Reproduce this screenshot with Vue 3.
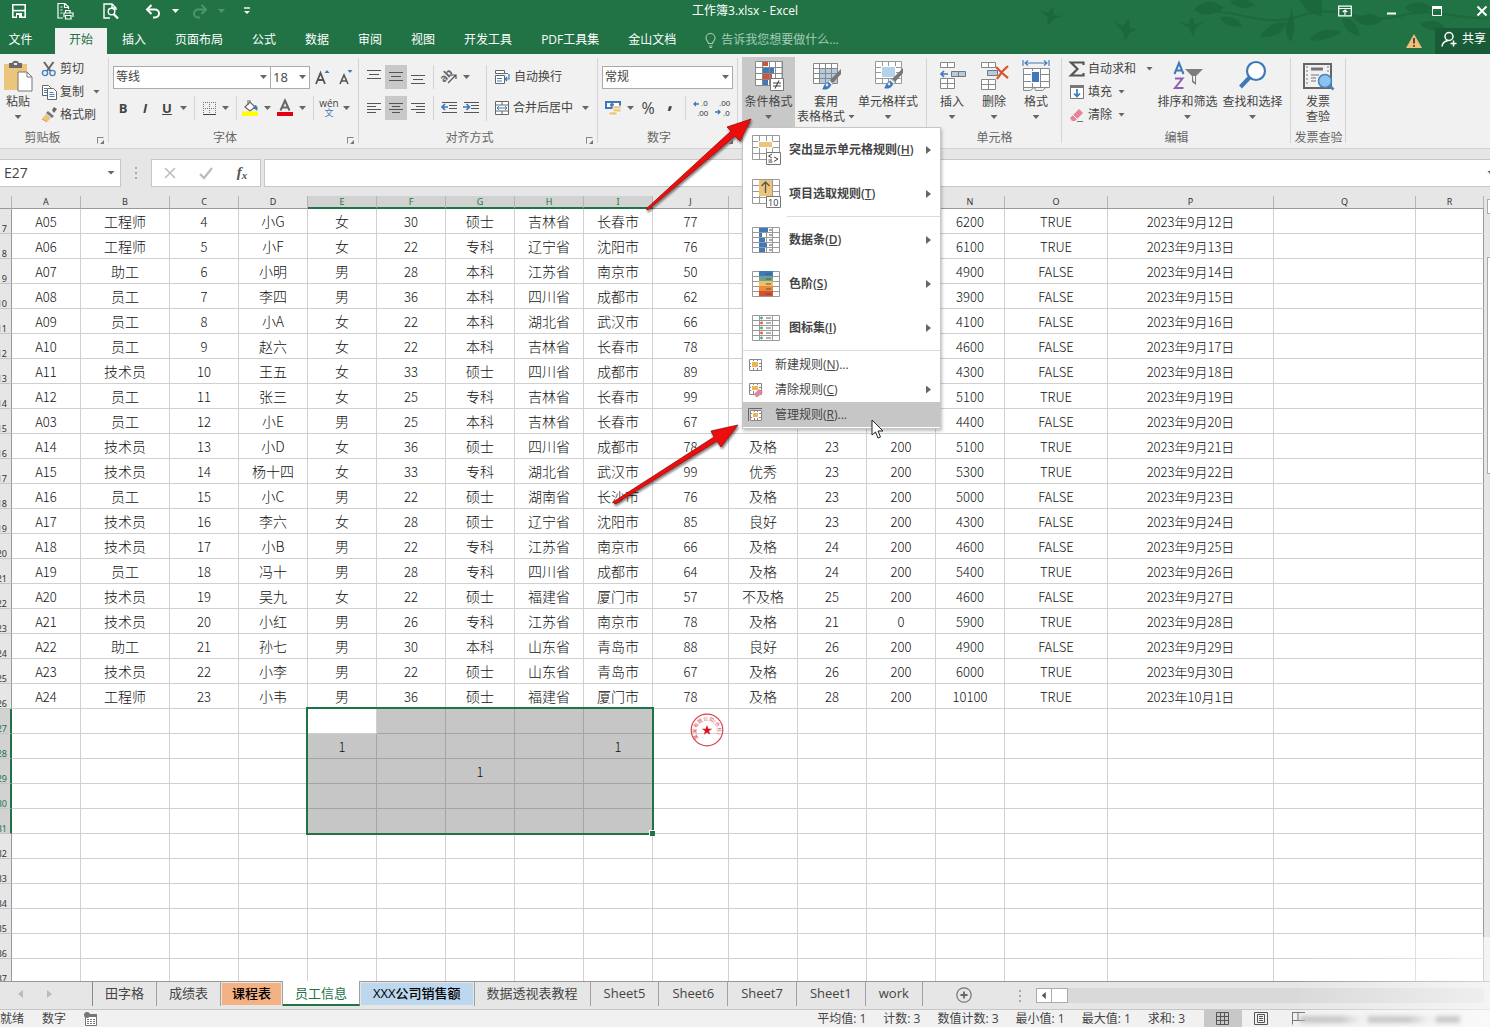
<script setup>
import { h } from 'vue'

const grid = (w, hh, cols, rows, x0 = 0, y0 = 0) => {
  let d = ''
  for (let i = 0; i <= cols; i++) d += `M${x0 + Math.round((w * i) / cols) + 0.5} ${y0 + 0.5}v${hh}`
  for (let j = 0; j <= rows; j++) d += `M${x0 + 0.5} ${y0 + Math.round((hh * j) / rows) + 0.5}h${w}`
  return d
}
const frame = (w, hh, c, r, x = 0, y = 0, s = '#888') => `<path d="${grid(w, hh, c, r, x, y)}" fill="none" stroke="${s}"/>`
const white = (x, y, w, hh) => `<rect x="${x}" y="${y}" width="${w}" height="${hh}" fill="#fff"/>`
const lines = (list) => `<path d="${list.map(([x, y, w]) => `M${x} ${y}.5h${w}`).join('')}" stroke="#555"/>`
const brush = (x, y) =>
  `<g transform="translate(${x} ${y})"><path d="M19 0v5l-8 9-3-3z" fill="#777"/><path d="M7 11l4 4-2 1-3-3z" fill="#fff" stroke="#999" stroke-width=".6"/><path d="M6 13c3 1 4 3 2 5-2 3-6 3-8 2 2-1 1-5 6-7z" fill="#3f79b7"/><circle cx="5" cy="16" r="1.4" fill="#dbe8f5"/></g>`
const tiny = (x, y, t) => `<text x="${x}" y="${y}" font-size="8" font-family="Liberation Sans" fill="#333">${t}</text>`

const icons = {
  save: [16, 16, '<path d="M1.8 1.8h12.4v12.4H1.8z" fill="none" stroke="#fff" stroke-width="1.6"/><path d="M2 7.6h12" stroke="#fff" stroke-width="1.6"/><path d="M5 10h6v5H5z" fill="#fff"/><path d="M6 12h2v3H6z" fill="#217346"/>'],
  print: [18, 18, '<g fill="none" stroke="#fff" stroke-width="1.2"><path d="M7 16H2V1.500h7l3.500 3.500v2M4.500 5h2M4.500 8h2M4.500 11h2M8.500 2v3.500h4"/><path d="M9.500 11V8.500h4.500V11M8 15V11h9v4"/><path d="M9.500 13.500h5.500v3.500h-5.500z"/></g>'],
  preview: [18, 18, '<g fill="none" stroke="#fff" stroke-width="1.4"><path d="M8 16H2V2h8l4 4v2M10 2v4h4"/><circle cx="9.500" cy="9.500" r="3.300"/></g><path d="M11.500 12l4.500 4.500" stroke="#fff" stroke-width="2.400"/>'],
  undo: [16, 14, '<path d="M2 5.500h8a4 4 0 010 8H8" fill="none" stroke="#fff" stroke-width="2"/><path d="M6.500 1L2 5.500 6.500 10" fill="none" stroke="#fff" stroke-width="2"/>'],
  redo: [16, 14, '<path d="M14 5.500H6a4 4 0 000 8h2M9.500 1L14 5.500 9.500 10" fill="none" stroke="#4f9470" stroke-width="2"/>'],
  custom: [10, 8, '<path d="M2 1h6" stroke="#fff" stroke-width="1.400"/><path d="M2 4h6L5 7z" fill="#fff"/>'],
  ribbonOpt: [14, 12, '<path d="M.7 1.200h12.600v9.600H.7zM1 3.500h12M7 10V5M4.800 7L7 5l2.200 2" fill="none" stroke="#fff" stroke-width="1.200"/>'],
  min: [10, 12, '<path d="M1 8.500h9" stroke="#fff" stroke-width="2"/>'],
  max: [12, 12, '<path d="M1.500 1.500h9v9h-9z" fill="none" stroke="#fff"/><path d="M1 2.500h10" stroke="#fff" stroke-width="3"/>'],
  close: [12, 12, '<path d="M1.500 1.500l9 9M10.500 1.500l-9 9" stroke="#fff" stroke-width="2"/>'],
  bulb: [11, 15, '<path d="M3.500 10.500C3.500 8.500 1 8 1 5a4.500 4.500 0 019 0c0 3-2.500 3.500-2.500 5.500zM4 13h3.500M4.500 14.500H7" fill="none" stroke="#a6cbb6" stroke-width="1.100"/>'],
  warn: [16, 14, '<path d="M8 0l8 14H0z" fill="#eec07c"/><path d="M8 4v5.500M8 11v1.800" stroke="#433" stroke-width="1.700"/>'],
  share: [16, 16, '<g fill="none" stroke="#fff" stroke-width="1.500"><circle cx="8" cy="5.500" r="4"/><path d="M1 15.500c.5-4 3-5.500 6-6M12.500 9.500v6M9.500 12.500h6"/></g>'],
  paste: [30, 32, '<path d="M1 4h23v26H1z" fill="#ecc57d"/><path d="M6 3h3c1-3 6-3 7 0h3v5H6z" fill="#6b6b6b"/><rect x="11" y="3" width="3" height="2" fill="#f1f1f1"/><path d="M15 12h9l5 5v14H15z" fill="#fff" stroke="#777"/><path d="M24 12v5h5" fill="none" stroke="#777"/>'],
  cut: [16, 16, '<path d="M3 1l6.500 9M12.500 1L6 10" stroke="#666" stroke-width="2"/><circle cx="4" cy="12" r="2.600" fill="none" stroke="#4a82bd" stroke-width="1.400"/><circle cx="11.500" cy="12" r="2.600" fill="none" stroke="#4a82bd" stroke-width="1.400"/>'],
  copy: [16, 16, '<g fill="#fff" stroke="#666"><path d="M1.500 1.500h6l2 2v8h-8z"/><path d="M6.500 4.500h6l3 3v8h-9z"/></g><path d="M3 4.500h3M3 6.500h3M3 8.500h3M8.500 8.500h4M8.500 10.500h5M8.500 12.500h5" stroke="#4a82bd"/>'],
  painter: [16, 16, '<path d="M11 3l2-3 3 2-3 4z" fill="#666"/><path d="M7 4l6 5-2 2-6-5z" fill="#777"/><path d="M5 7l5 4-4 4-5-3z" fill="#ecc57d"/><path d="M1 12l5 3" stroke="#cf9c4a"/>'],
  growA: [15, 16, '<path d="M1 15L5.500 4 10 15M2.800 11h5.500" fill="none" stroke="#555" stroke-width="1.800"/><path d="M9.500 4h5L12 1z" fill="#3f79b7"/>'],
  shrinkA: [15, 16, '<path d="M2 15L6 6l4 9M3.500 12h5" fill="none" stroke="#555" stroke-width="1.600"/><path d="M9.500 1h5L12 4z" fill="#3f79b7"/>'],
  border: [15, 15, '<path d="M1.500 1v12M7.500 1v12M13.500 1v12M1 1.500h13M1 7.500h13" stroke="#777" stroke-dasharray="1 1"/><path d="M1 13.500h13" stroke="#444"/>'],
  fill: [18, 16, '<path d="M3 7l5-5 5 5-5 4z" fill="#fff" stroke="#666" stroke-width="1.200"/><path d="M6 5V0M8 2V0" stroke="#666"/><path d="M13 5c3 1 3 4 2 6-1-2-3-2-4-2z" fill="#3f79b7"/><path d="M0 11.500h16V16H0z" fill="#ff0"/>'],
  fontColor: [16, 16, '<path d="M3.500 10.500L8 0.500l4.500 10M5 7.500h6" fill="none" stroke="#666" stroke-width="2"/><path d="M0 12h16v4H0z" fill="#e2000f"/>'],
  top: [16, 18, lines([[1, 2, 14], [3, 6, 10], [1, 10, 14]])],
  middle: [16, 18, lines([[1, 4, 14], [3, 8, 10], [1, 12, 14]])],
  bottom: [16, 18, lines([[1, 7, 14], [3, 11, 10], [1, 15, 14]])],
  left: [16, 16, lines([[1, 3, 14], [1, 6, 9], [1, 9, 14], [1, 12, 9]])],
  center: [16, 16, lines([[1, 3, 14], [4, 6, 8], [1, 9, 14], [4, 12, 8]])],
  right: [16, 16, lines([[1, 3, 14], [6, 6, 9], [1, 9, 14], [6, 12, 9]])],
  orient: [18, 18, '<text x="1" y="12" font-size="11" font-weight="bold" font-family="Open Sans" fill="#666" transform="rotate(-45 6 10)">ab</text><path d="M8 15l8-8M12 7h4v4" fill="none" stroke="#555" stroke-width="1.200"/>'],
  outdent: [16, 16, lines([[1, 2, 15], [8, 5, 8], [8, 8, 8], [1, 12, 15]]) + '<path d="M7 7H1M4 4L1 7l3 3" fill="none" stroke="#3f79b7" stroke-width="1.700"/>'],
  indent: [16, 16, lines([[1, 2, 15], [8, 5, 8], [8, 8, 8], [1, 12, 15]]) + '<path d="M0 7h6M3.500 4l3 3-3 3" fill="none" stroke="#3f79b7" stroke-width="1.700"/>'],
  wrap: [17, 16, '<path d="M1.500 1.500h9v3h-9zM1.500 6.500h9v8h-9z" fill="#fff" stroke="#666"/><path d="M3 9.500h5M3 12h5" stroke="#3f79b7"/><path d="M10 4.500h4M15 5v5h-4M13 8l-2 2 2 2" fill="none" stroke="#3f79b7" stroke-width="1.200"/>'],
  merge: [16, 16, '<path d="M1.500 1.500h13v13h-13zM1.500 5h13M1.500 11h13M8 1.500V5M8 11v3.500" fill="#fff" stroke="#666"/><path d="M3 8h10M5 6.200L3 8l2 1.800M11 6.200L13 8l-2 1.800" fill="none" stroke="#3f79b7"/>'],
  money: [18, 18, '<path d="M1 2h16v8H1z" fill="#3f79b7"/><path d="M3 4h12v4H3z" fill="#fff"/><circle cx="8" cy="6" r="2" fill="#3f79b7"/><g fill="#ecc57d" stroke="#fff" stroke-width=".6"><rect x="9" y="7" width="8" height="3"/><rect x="9" y="10" width="8" height="3"/><rect x="5" y="13" width="8" height="3"/></g>'],
  decInc: [18, 18, tiny(9, 7, '.0') + tiny(5, 17, '.00') + '<path d="M7 5H2M4 3L2 5l2 2" fill="none" stroke="#3f79b7" stroke-width="1.300"/>'],
  decDec: [18, 18, tiny(5, 7, '.00') + tiny(9, 17, '.0') + '<path d="M1 13h5M4 11l2 2-2 2" fill="none" stroke="#3f79b7" stroke-width="1.300"/>'],
  cond: [32, 32, white(2, 1, 26, 24) + '<path d="M10 1h5v5h-5zM10 14h9v5h-9z" fill="#d1533a"/><path d="M10 7h11v6H10zM10 20h5v5h-5z" fill="#3f79b7"/>' + frame(27, 24, 4, 4, 2, 1) + '<path d="M17.500 18.500h13v12h-13z" fill="#fff" stroke="#777"/><path d="M20 23h8M20 26h8M26 20.500l-4 8" stroke="#444" stroke-width="1.100"/>'],
  tableFmt: [32, 32, white(3, 3, 25, 21) + '<path d="M9 9h18v15H9z" fill="#b4cbe2"/>' + frame(24, 20, 4, 4, 3, 3) + brush(12, 9)],
  cellStyle: [32, 32, white(3, 1, 26, 22) + frame(26, 22, 4, 4, 3, 1, '#999') + '<path d="M9.500 6.500h14v11h-14z" fill="#b4d2ec" stroke="#fff"/>' + brush(12, 8)],
  insert: [30, 32, white(3, 2, 15, 5) + frame(14, 5, 2, 1, 3, 2) + '<path d="M14.500 11.500h14v5h-14zM21.500 11.500v5" fill="#b4cbe2" stroke="#777"/><path d="M11 14H4M7 11l-3 3 3 3" fill="none" stroke="#3f79b7" stroke-width="1.700"/>' + white(3, 19, 15, 10) + frame(14, 10, 2, 2, 3, 18)],
  remove: [30, 32, white(2, 2, 15, 5) + frame(14, 5, 2, 1, 2, 2) + '<path d="M8.500 10.500h10v5h-10z" fill="#b4cbe2" stroke="#777"/>' + white(2, 19, 15, 10) + frame(14, 10, 2, 2, 2, 19) + '<path d="M17 7c4 4 8 8 12 11M29 6c-5 4-8 8-11 13" fill="none" stroke="#d9532f" stroke-width="2.200"/>'],
  format: [30, 32, '<path d="M2 0v6M28 0v6M4 3h22M7 .5L4 3l3 2.500M23 .5L26 3l-3 2.500" fill="none" stroke="#3f79b7" stroke-width="1.100"/>' + white(2, 8, 27, 19) + frame(26, 19, 3, 3, 2, 8) + '<path d="M10.500 11.500h8v11h-8z" fill="#3f79b7" stroke="#fff"/><path d="M2.500 27v3.500h7l4-3.500 1 3.500h7l4-3.500" fill="none" stroke="#888"/>'],
  sum: [16, 16, '<path d="M14.500 4V1.500H2L8.500 8 2 14.500h12.500V12" fill="none" stroke="#555" stroke-width="2.200"/>'],
  down: [16, 16, '<path d="M1.500 1.500h13v13h-13z" fill="#fff" stroke="#777"/><path d="M1 1h14v3H1z" fill="#777"/><path d="M8 5v7M5 9.500L8 12.500l3-3" fill="none" stroke="#3f79b7" stroke-width="1.700"/>'],
  eraser: [16, 16, '<path d="M1 11l9-9 4 4-8 8H3z" fill="#e8849a"/><path d="M4 8l4 4" stroke="#fff"/><path d="M8 14.500h6" stroke="#777"/>'],
  sort: [30, 32, '<path d="M1.500 14L6 3l4.500 11M3.500 10.500h5" fill="none" stroke="#3f79b7" stroke-width="2"/><path d="M2 18.500h7.500L2 28h8.500" fill="none" stroke="#8d5fb5" stroke-width="2"/><path d="M12 9h18l-7 7v9l-4-3v-6z" fill="#7d7d7d"/><path d="M20 16h2v6l-1.500-1z" fill="#fff"/>'],
  find: [30, 32, '<circle cx="18" cy="11" r="9" fill="#fff" stroke="#3f79b7" stroke-width="2.200"/><path d="M11.500 17.500L2.500 27" stroke="#3f79b7" stroke-width="4"/>'],
  invoice: [32, 30, '<path d="M2 3h27v24H2z" fill="#f1f1f1" stroke="#666" stroke-width="2"/><path d="M5 5v20M26 5v8" stroke="#777" stroke-dasharray="2 2"/><path d="M9 8h12" stroke="#777" stroke-width="3"/><path d="M9 14h8M9 17h5M9 20h5" stroke="#777" stroke-width="1.200"/><circle cx="23" cy="20" r="6.500" fill="#8cc3f2" stroke="#4a82bd" stroke-width="1.500"/><path d="M27.500 24.500l4 4" stroke="#4a82bd" stroke-width="2.500"/>'],
  mHigh: [30, 32, white(1, 1, 27, 24) + frame(27, 24, 4, 4, 1, 1, '#999') + '<path d="M7.500 7.500h14v6h-14z" fill="#ecc57d" stroke="#fff"/><path d="M15.500 18.500h14v12h-14z" fill="#fff" stroke="#777"/><path d="M21 20l-3.500 2 3.500 2M17.500 26H21M17.500 28h4M23 23l4 2-4 2.500" fill="none" stroke="#444"/>'],
  mTop: [30, 32, white(1, 1, 27, 24) + frame(27, 24, 4, 4, 1, 1, '#999') + '<path d="M8 2h13v16H8z" fill="#ecc57d"/><path d="M14.500 15V4M10.500 8l4-4 4 4" fill="none" stroke="#555" stroke-width="1.300"/><path d="M15.500 18.500h14v11h-14z" fill="#fff" stroke="#777"/><text x="17" y="28" font-size="9" font-weight="400" font-family="Open Sans" fill="#333">10</text>'],
  mBars: [30, 32, white(1, 3, 27, 25) + frame(27, 25, 4, 5, 1, 3, '#999') + '<path d="M8 4h9v4H8zM8 9h3v4H8zM8 14h6v4H8zM8 19h8v4H8zM8 24h6v4H8z" fill="#3f79b7"/><path d="M18 6h3M18 11h3M18 16h3M18 21h3M18 26h3" stroke="#555"/>'],
  mScale: [30, 32, white(1, 3, 27, 25) + frame(27, 25, 4, 5, 1, 3, '#999') + '<path d="M8 3h14v5H8z" fill="#3f79b7"/><path d="M8 8h14v5H8z" fill="#6ba393"/><path d="M8 13h14v5H8z" fill="#eec169"/><path d="M8 18h14v5H8z" fill="#ea8b3e"/><path d="M8 23h14v5H8z" fill="#d8502f"/><path d="M15 6h5M15 11h5M15 16h5M15 21h5M15 26h5" stroke="#555"/>'],
  mIcons: [30, 32, white(1, 3, 27, 25) + frame(27, 25, 4, 5, 1, 3, '#999') + '<path d="M9 4h11v4H9zM9 9h11v4H9zM9 14h11v4H9zM9 19h11v4H9zM9 24h11v4H9z" fill="#fff"/><g fill="#4eae6c"><circle cx="10.500" cy="16" r="1.400"/><circle cx="10.500" cy="26" r="1.400"/><circle cx="10.500" cy="6" r="1.400"/></g><g fill="#e2574a"><circle cx="10.500" cy="11" r="1.400"/><circle cx="10.500" cy="21" r="1.400"/></g><path d="M15 6h5M15 11h5M15 16h5M15 21h5M15 26h5" stroke="#666"/>'],
  sNew: [16, 16, white(1, 2, 12, 11) + frame(12, 11, 3, 3, 1, 2) + '<path d="M3.500 4.500h7v6h-7z" fill="#ecb45c" stroke="#fff"/>'],
  sClear: [16, 16, white(1, 2, 12, 11) + frame(12, 11, 3, 3, 1, 1) + '<path d="M3.500 3.500h7v5h-7z" fill="#ecb45c" stroke="#fff"/><path d="M6 12l5-5 4 3-5 5H8z" fill="#e8849a"/>'],
  sManage: [16, 16, '<path d="M.5 14V1.500H14" fill="none" stroke="#666"/>' + white(2, 3, 12, 11) + frame(11, 10, 3, 3, 2, 3) + '<path d="M4.500 5.500h6v5h-6z" fill="#ecb45c" stroke="#fff"/>'],
  macro: [14, 14, '<path d="M1.500 4.500h11v9h-11z" fill="#fff" stroke="#777"/><path d="M5 2h8v3H5z" fill="#777"/><circle cx="3" cy="3" r="3" fill="#777"/><path d="M3 7.500h8M3 9.500h8M3 11.500h8" stroke="#777" stroke-dasharray="2 1"/>'],
  plus: [16, 16, '<circle cx="8" cy="8" r="7.200" fill="none" stroke="#777" stroke-width="1.200"/><path d="M8 4.500v7M4.500 8h7" stroke="#666" stroke-width="1.800"/>'],
  vNormal: [14, 14, frame(12, 12, 3, 3, 0, 0, '#555')],
  vPage: [14, 14, '<path d="M.5.5h13v12H.5zM3.500 2.500h7v8h-7zM5 4.500h4M5 6.500h4M5 8.500h4" fill="none" stroke="#555"/>'],
  vBreak: [14, 14, '<path d="M.5.5v12M0 .5h13M6 0v8M.5 8.500H13" fill="none" stroke="#777"/>'],
}
const Icon = ({ name }) => {
  const [w, hh, html] = icons[name]
  return h('svg', { width: w, height: hh, viewBox: `0 0 ${w} ${hh}`, innerHTML: html, 'aria-hidden': 'true' })
}
Icon.props = ['name']

const tabs = ['插入', '页面布局', '公式', '数据', '审阅', '视图', '开发工具', 'PDF工具集', '金山文档']
const bigMenu = [
  ['mHigh', '突出显示单元格规则', 'H'],
  ['mTop', '项目选取规则', 'T'],
  ['mBars', '数据条', 'D'],
  ['mScale', '色阶', 'S'],
  ['mIcons', '图标集', 'I'],
]
const smallMenu = [
  ['sNew', '新建规则', 'N', '...', false],
  ['sClear', '清除规则', 'C', '', true],
  ['sManage', '管理规则', 'R', '...', false],
]

const headW = 12
const rowH = 25
const colHeadH = 13
const widths = [69, 89, 69, 69, 69, 69, 69, 69, 69, 76, 69, 69, 69, 69, 103, 166, 142]
const letters = 'ABCDEFGHIJKLMNOPQR'.split('')
const raw = `A05 工程师 4 小G 女 30 硕士 吉林省 长春市 77 - - - 6200 TRUE 2023年9月12日
A06 工程师 5 小F 女 22 专科 辽宁省 沈阳市 76 - - - 6100 TRUE 2023年9月13日
A07 助工 6 小明 男 28 本科 江苏省 南京市 50 - - - 4900 FALSE 2023年9月14日
A08 员工 7 李四 男 36 本科 四川省 成都市 62 - - - 3900 FALSE 2023年9月15日
A09 员工 8 小A 女 22 本科 湖北省 武汉市 66 - - - 4100 FALSE 2023年9月16日
A10 员工 9 赵六 女 22 本科 吉林省 长春市 78 - - - 4600 FALSE 2023年9月17日
A11 技术员 10 王五 女 33 硕士 四川省 成都市 89 - - - 4300 FALSE 2023年9月18日
A12 员工 11 张三 女 25 专科 吉林省 长春市 99 - - - 5100 TRUE 2023年9月19日
A03 员工 12 小E 男 25 本科 吉林省 长春市 67 - - - 4400 FALSE 2023年9月20日
A14 技术员 13 小D 女 36 硕士 四川省 成都市 78 及格 23 200 5100 TRUE 2023年9月21日
A15 技术员 14 杨十四 女 33 专科 湖北省 武汉市 99 优秀 23 200 5300 TRUE 2023年9月22日
A16 员工 15 小C 男 22 硕士 湖南省 长沙市 76 及格 23 200 5000 FALSE 2023年9月23日
A17 技术员 16 李六 女 28 硕士 辽宁省 沈阳市 85 良好 23 200 4300 FALSE 2023年9月24日
A18 技术员 17 小B 男 22 专科 江苏省 南京市 66 及格 24 200 4600 FALSE 2023年9月25日
A19 员工 18 冯十 男 28 专科 四川省 成都市 64 及格 24 200 5400 TRUE 2023年9月26日
A20 技术员 19 吴九 女 22 硕士 福建省 厦门市 57 不及格 25 200 4600 FALSE 2023年9月27日
A21 技术员 20 小红 男 26 专科 江苏省 南京市 78 及格 21 0 5900 TRUE 2023年9月28日
A22 助工 21 孙七 男 30 本科 山东省 青岛市 88 良好 26 200 4900 FALSE 2023年9月29日
A23 技术员 22 小李 男 22 硕士 山东省 青岛市 67 及格 26 200 6000 TRUE 2023年9月30日
A24 工程师 23 小韦 男 36 硕士 福建省 厦门市 78 及格 28 200 10100 TRUE 2023年10月1日`
const data = raw.split('\n').map((l) => l.split(' ').map((c) => (c === '-' ? '' : c)))
const loose = { 28: { 4: '1', 8: '1' }, 29: { 6: '1' } }
const rows = Array.from({ length: 31 }, (_, i) => {
  const n = i + 7
  return { n, cells: letters.map((_, c) => data[i]?.[c] ?? loose[n]?.[c] ?? '') }
})
const sel = { c0: 4, c1: 8, r0: 27, r1: 31 }
const inCols = (c) => c >= sel.c0 && c <= sel.c1
const inRows = (n) => n >= sel.r0 && n <= sel.r1
const cellClass = (n, c, t) => ({
  latin: /^[\x00-\x7f]|^2023/.test(t),
  picked: inCols(c) && inRows(n) && !(c === sel.c0 && n === sel.r0),
})
const span = (a, b) => widths.slice(a, b).reduce((s, w) => s + w, 0)
const selStyle = {
  left: `${headW + span(0, sel.c0) - 2}px`,
  top: `${colHeadH + (sel.r0 - 7) * rowH - 2}px`,
  width: `${span(sel.c0, sel.c1 + 1) + 3}px`,
  height: `${(sel.r1 - sel.r0 + 1) * rowH + 3}px`,
}
const sheets = [
  ['田字格'], ['成绩表'], ['课程表', 'orange'], ['员工信息', 'active'], ['XXX公司销售额', 'blue'],
  ['数据透视表教程'], ['Sheet5', 'en'], ['Sheet6', 'en'], ['Sheet7', 'en'], ['Sheet1', 'en'], ['work', 'en'],
]
const stats = ['平均值: 1', '计数: 3', '数值计数: 3', '最小值: 1', '最大值: 1', '求和: 3']
</script>

<template>
  <div class="app">
    <header class="top">
      <svg class="deco" width="480" height="54" viewBox="0 0 480 54" aria-hidden="true">
        <g fill="#1b653b" opacity=".75">
          <path d="M30 10l8 3 5-6 1 8 8 1-9 4-6 6 1-8z" /><path d="M104 22l9 4 6-8 1 10 8 1-8 4-5 8-2-9z" />
          <path d="M168 22l10 2 4-8 3 8 9-2-8 6-3 9-4-9z" />
          <path d="M184 10c10-12 22-9 30-2-10 8-20 8-30 2zM210 18c10-4 18 0 22 8-10 2-18-1-22-8zM220 2c8-5 18-3 25 3-10 5-18 4-25-3z" />
          <path d="M250 37c6-10 14-16 26-14-2 10-12 15-26 14zM282 14c4 10 3 18-1 28-7-8-8-18 1-28zM300 40c8-12 20-12 32-8-10 6-20 10-32 8zM332 18c9-1 16 6 18 18-10-1-17-8-18-18z" />
          <path d="M290 0h22v16c-10-1-18-6-22-16zM345 20c8-8 20-8 28 0-8 7-20 7-28 0zM395 8c8-8 20-7 28 0-8 8-20 7-28 0zM410 24c10-6 20-3 26 4-9 5-19 3-26-4z" />
        </g>
        <path d="M190 14c30-10 60 16 100 2s60 10 100 0 50 4 90 2M282 10l-4 24M335 14l20 8" fill="none" stroke="#1b653b" stroke-width="2" opacity=".75" />
      </svg>
      <div class="title">
        <div class="quick">
          <button aria-label="保存" class="w38"><Icon name="save" /></button>
          <button aria-label="快速打印" class="w54"><Icon name="print" /></button>
          <button aria-label="打印预览" class="w38"><Icon name="preview" /></button>
          <button aria-label="撤消" class="w46"><Icon name="undo" /></button>
          <i class="caret lit"></i>
          <button aria-label="恢复" class="w38"><Icon name="redo" /></button>
          <i class="caret dim"></i>
          <button aria-label="自定义" class="w38"><Icon name="custom" /></button>
        </div>
        <h1>工作簿3.xlsx - Excel</h1>
        <div class="win">
          <button aria-label="功能区选项"><Icon name="ribbonOpt" /></button>
          <button aria-label="最小化"><Icon name="min" /></button>
          <button aria-label="最大化"><Icon name="max" /></button>
          <button aria-label="关闭"><Icon name="close" /></button>
        </div>
      </div>
      <nav class="tabs">
        <button class="file">文件</button>
        <button class="on">开始</button>
        <button v-for="t in tabs" :key="t">{{ t }}</button>
        <button class="tell"><Icon name="bulb" />告诉我您想要做什么...</button>
        <span class="grow"></span>
        <Icon name="warn" class="warn" />
        <button class="share"><Icon name="share" />共享</button>
      </nav>
    </header>

    <section class="ribbon">
      <div class="group clip">
        <div class="body">
          <button class="big paste"><Icon name="paste" /><span>粘贴</span><i class="caret"></i></button>
          <div class="stack">
            <button><Icon name="cut" />剪切</button>
            <button class="copy"><Icon name="copy" />复制<i class="caret"></i></button>
            <button><Icon name="painter" />格式刷</button>
          </div>
        </div>
        <footer>剪贴板<i class="launch"></i></footer>
      </div>

      <div class="group font">
        <div class="body two">
          <div class="line">
            <label class="combo fname"><select aria-label="字体"><option>等线</option></select><i class="caret"></i></label>
            <label class="combo fsize"><select aria-label="字号"><option>18</option></select><i class="caret"></i></label>
            <button class="w24" aria-label="增大字号"><Icon name="growA" /></button>
            <button class="w22" aria-label="减小字号"><Icon name="shrinkA" /></button>
          </div>
          <div class="line">
            <button class="w20"><b>B</b></button><button class="w24"><b><em>I</em></b></button><button class="w20"><b><u>U</u></b></button>
            <i class="caret"></i><i class="sep"></i>
            <button class="w20" aria-label="边框"><Icon name="border" /></button><i class="caret"></i><i class="sep"></i>
            <button class="w20" aria-label="填充颜色"><Icon name="fill" /></button><i class="caret"></i>
            <button class="w22" aria-label="字体颜色"><Icon name="fontColor" /></button><i class="caret"></i><i class="sep"></i>
            <button class="w22 wen"><span>wén</span><span class="han">文</span></button><i class="caret"></i>
          </div>
        </div>
        <footer>字体<i class="launch"></i></footer>
      </div>

      <div class="group align">
        <div class="body">
          <div class="two">
            <div class="line">
              <button class="w22" aria-label="顶端对齐"><Icon name="top" /></button><button class="w22 sel" aria-label="垂直居中"><Icon name="middle" /></button><button class="w22" aria-label="底端对齐"><Icon name="bottom" /></button>
              <i class="sep"></i><button class="w22" aria-label="方向"><Icon name="orient" /></button><i class="caret"></i>
            </div>
            <div class="line">
              <button class="w22" aria-label="左对齐"><Icon name="left" /></button><button class="w22 sel" aria-label="居中"><Icon name="center" /></button><button class="w22" aria-label="右对齐"><Icon name="right" /></button>
              <i class="sep"></i><button class="w22" aria-label="减少缩进"><Icon name="outdent" /></button><button class="w22" aria-label="增加缩进"><Icon name="indent" /></button>
            </div>
          </div>
          <i class="sep tall"></i>
          <div class="two">
            <div class="line"><button class="txt"><Icon name="wrap" />自动换行</button></div>
            <div class="line"><button class="txt"><Icon name="merge" />合并后居中</button><i class="caret wide"></i></div>
          </div>
        </div>
        <footer>对齐方式<i class="launch"></i></footer>
      </div>

      <div class="group num">
        <div class="body two">
          <div class="line"><label class="combo nfmt"><select aria-label="数字格式"><option>常规</option></select><i class="caret"></i></label></div>
          <div class="line">
            <button class="w22" aria-label="会计数字格式"><Icon name="money" /></button><i class="caret"></i>
            <button class="w22 pct">%</button><button class="w22 comma">,</button><i class="sep"></i>
            <button class="w22" aria-label="增加小数位数"><Icon name="decInc" /></button><button class="w22" aria-label="减少小数位数"><Icon name="decDec" /></button>
          </div>
        </div>
        <footer>数字<i class="launch"></i></footer>
      </div>

      <div class="group styles">
        <div class="body">
          <div class="anchor">
            <button class="big open"><Icon name="cond" /><span>条件格式</span><i class="caret"></i></button>
            <div class="menu" role="menu">
              <template v-for="(m, i) in bigMenu" :key="m[0]">
                <button class="mi" role="menuitem"><Icon :name="m[0]" /><span>{{ m[1] }}(<u>{{ m[2] }}</u>)</span><i class="sub"></i></button>
                <hr v-if="i === 1" class="inset" />
              </template>
              <hr />
              <button v-for="m in smallMenu" :key="m[0]" class="mi small" :class="{ hot: m[0] === 'sManage' }" role="menuitem"><Icon :name="m[0]" /><span>{{ m[1] }}(<u>{{ m[2] }}</u>){{ m[3] }}</span><i v-if="m[4]" class="sub"></i></button>
            </div>
          </div>
          <button class="big"><Icon name="tableFmt" /><span>套用</span><span class="row">表格格式<i class="caret"></i></span></button>
          <button class="big"><Icon name="cellStyle" /><span>单元格样式</span><i class="caret"></i></button>
        </div>
      </div>

      <div class="group cells">
        <div class="body">
          <button class="big"><Icon name="insert" /><span>插入</span><i class="caret"></i></button>
          <button class="big"><Icon name="remove" /><span>删除</span><i class="caret"></i></button>
          <button class="big"><Icon name="format" /><span>格式</span><i class="caret"></i></button>
        </div>
        <footer>单元格</footer>
      </div>

      <div class="group edit">
        <div class="body">
          <div class="stack">
            <button class="total"><Icon name="sum" />自动求和<i class="caret"></i></button>
            <button><Icon name="down" />填充<i class="caret"></i></button>
            <button><Icon name="eraser" />清除<i class="caret"></i></button>
          </div>
          <button class="big"><Icon name="sort" /><span>排序和筛选</span><i class="caret"></i></button>
          <button class="big"><Icon name="find" /><span>查找和选择</span><i class="caret"></i></button>
        </div>
        <footer>编辑</footer>
      </div>

      <div class="group inv">
        <div class="body"><button class="big"><Icon name="invoice" /><span>发票</span><span>查验</span></button></div>
        <footer>发票查验</footer>
      </div>
    </section>

    <section class="fbar">
      <label class="namebox"><input value="E27" aria-label="名称框" /><i class="caret"></i></label>
      <i class="dots"></i>
      <div class="fx">
        <button aria-label="取消"><svg width="14" height="14" viewBox="0 0 14 14"><path d="M2 2l10 10M12 2L2 12" stroke="#bbb" stroke-width="1.500" /></svg></button>
        <button aria-label="输入"><svg width="14" height="14" viewBox="0 0 14 14"><path d="M1 8l4 4 8-10" fill="none" stroke="#bbb" stroke-width="2.200" /></svg></button>
        <button class="fn"><em>f</em><small><em>x</em></small></button>
      </div>
      <label class="formula"><input value="" aria-label="编辑栏" /><i class="caret"></i></label>
    </section>

    <main class="work">
      <div class="sheet">
        <table>
          <colgroup><col :style="{ width: headW + 'px' }" /><col v-for="(w, i) in widths" :key="i" :style="{ width: w + 'px' }" /><col /></colgroup>
          <thead>
            <tr><th class="corner"></th><th v-for="(l, c) in letters" :key="l" scope="col" :class="{ on: inCols(c) }">{{ l }}</th></tr>
          </thead>
          <tbody>
            <tr v-for="r in rows" :key="r.n">
              <th scope="row" :class="{ on: inRows(r.n) }"><div>{{ r.n }}</div></th>
              <td v-for="(t, c) in r.cells" :key="c" :class="cellClass(r.n, c, t)">{{ t }}</td>
            </tr>
          </tbody>
        </table>
        <div class="selection" :style="selStyle"><i></i></div>
        <svg class="stamp" width="34" height="34" viewBox="0 0 34 34">
          <circle cx="17" cy="17" r="15.800" fill="none" stroke="#d8404c" stroke-width="1.200" />
          <path id="arc" d="M9 25a10.500 10.500 0 1116 0" fill="none" />
          <text font-size="5" fill="#d8404c"><textPath href="#arc">某某有限公司(合伙)</textPath></text>
          <path d="M17 12l1.300 3.700h3.900L19 18l1.200 3.700-3.200-2.200-3.200 2.200L15 18l-3.200-2.300h3.900z" fill="#e01020" />
        </svg>
      </div>
      <div class="vscroll"><i class="up"></i><i class="thumb"></i></div>
    </main>

    <div class="sheetbar">
      <div class="nav"><i class="pl"></i><i class="pr"></i></div>
      <button v-for="s in sheets" :key="s[0]" :class="s[1]"><span>{{ s[0] }}</span></button>
      <button class="add" aria-label="新工作表"><Icon name="plus" /></button>
      <i class="dots"></i>
      <div class="hscroll"><i class="lbtn"></i><i class="hthumb"></i></div>
    </div>

    <footer class="status">
      <span class="ready">就绪</span><span>数字</span><Icon name="macro" />
      <span class="grow"></span>
      <span v-for="s in stats" :key="s" class="stat">{{ s }}</span>
      <div class="views">
        <button class="sel" aria-label="普通"><Icon name="vNormal" /></button>
        <button aria-label="页面布局视图"><Icon name="vPage" /></button>
        <button aria-label="分页预览"><Icon name="vBreak" /></button>
      </div>
    </footer>
    <div class="haze"><i></i></div>

    <svg class="arrows" width="160" height="400" viewBox="600 110 160 400" aria-hidden="true">
      <defs><filter id="sh" x="-20%" y="-20%" width="140%" height="140%"><feDropShadow dx="1" dy="2" stdDeviation="1" flood-opacity=".5" /></filter></defs>
      <g fill="#ee1010" stroke="#8f1010" stroke-width=".8" filter="url(#sh)">
        <path d="M646 209L731 131 727 127 751 119 740 141 735 136 648 210z" />
        <path d="M613 502L714 437 711 431 738 425 721 447 717 441 615 504z" />
      </g>
    </svg>
    <svg class="cursor" width="14" height="20" viewBox="0 0 14 20" aria-hidden="true"><path d="M1 1v15l3.500-3 2.500 6 2.500-1L7 12h5z" fill="#fff" stroke="#222" /></svg>
  </div>
</template>

<style>
body { margin: 0; overflow: hidden; }
</style>

<style scoped>
.app { position: relative; display: flex; flex-direction: column; height: 100vh; font: 12px/16px "Open Sans", "Noto Sans CJK SC", sans-serif; color: #444; background: #e6e6e6; overflow: hidden; }
.app * { box-sizing: border-box; }
button { display: flex; align-items: center; justify-content: center; padding: 0; border: 0; background: none; font: inherit; color: inherit; white-space: nowrap; flex: none; }
svg { flex: none; display: block; overflow: visible; }
.grow { flex: 1; }
.w20 { width: 20px; } .w22 { width: 22px; } .w24 { width: 24px; } .w38 { width: 38px; } .w46 { width: 46px; } .w54 { width: 54px; }
.caret { flex: none; width: 7px; height: 4px; margin: 0 3px; background: #666; clip-path: polygon(0 0, 100% 0, 50% 100%); }
.caret.lit { background: #fff; margin: 0 2px 0 -4px; } .caret.dim { background: #4f9470; margin: 0 3px 0 -1px; }

.top { position: relative; flex: none; background: #217346; color: #fff; }
.deco { position: absolute; right: 0; top: 0; }
.title { position: relative; display: grid; grid-template-columns: 1fr auto 1fr; align-items: center; height: 28px; padding-bottom: 6px; }
.quick { display: flex; align-items: center; }
.title h1 { margin: 0; font-size: 12px; font-weight: 400; }
.win { display: flex; justify-content: flex-end; }
.win button { width: 46px; }
.win button:last-child { width: 16px; margin-left: 14px; }
.tabs { position: relative; display: flex; height: 26px; gap: 1px; }
.tabs button { padding: 0 14px 2px; }
.tabs .file { width: 54px; padding: 0 22px 2px 9px; }
.tabs .on { background: #f1f1f1; color: #217346; }
.tabs .tell { color: #a6cbb6; gap: 5px; }
.warn { align-self: center; margin-right: 12px; }
.tabs .share { background: #185c37; padding: 0 4px 4px 6px; gap: 5px; }

.ribbon { display: flex; flex: none; height: 95px; padding-top: 3px; background: #f1f1f1; border-bottom: 1px solid #d2d2d2; position: relative; z-index: 2; }
.group { flex: none; display: flex; flex-direction: column; position: relative; }
.group::after { content: ""; position: absolute; right: 0; top: 1px; bottom: 5px; width: 1px; background: #d5d5d5; }
.body { display: flex; height: 70px; }
.group footer { position: relative; height: 21px; line-height: 21px; text-align: center; color: #666; }
.launch { position: absolute; right: 5px; bottom: 4px; width: 7px; height: 7px; border: 1px solid #888; border-right-color: transparent; border-bottom-color: transparent; }
.launch::after { content: ""; position: absolute; right: -1px; bottom: -1px; width: 4px; height: 4px; background: #777; clip-path: polygon(100% 0, 100% 100%, 0 100%); }
.clip { width: 109px; } .font { width: 250px; } .align { width: 239px; } .num { width: 140px; }
.styles { width: 189px; } .cells { width: 135px; } .edit { width: 229px; } .inv { width: 55px; }
.clip footer { padding-right: 24px; } .font footer { padding-right: 18px; } .align footer { padding-right: 18px; } .num footer { padding-right: 18px; }
.big { flex-direction: column; justify-content: flex-start; padding-top: 3px; height: 70px; line-height: 15px; }
.big svg { margin-bottom: 2px; height: 32px; }
.big > .caret { margin-top: 6px; }
.big .row { display: flex; align-items: center; }
.big .row .caret { margin: 0 0 0 3px; }
.paste { width: 36px; }
.stack { display: flex; flex-direction: column; padding-left: 5px; }
.stack button { height: 23px; gap: 3px; justify-content: flex-start; }
.copy .caret { margin-left: 6px; }
.two { display: flex; flex-direction: column; gap: 7px; padding-top: 8px; }
.line { display: flex; align-items: center; height: 24px; padding-left: 4px; }
.line button { height: 24px; }
.line b { font-size: 13px; }
.sel { background: #c8c8c8; }
.sep { flex: none; width: 1px; height: 24px; margin: 0 4px; background: #d5d5d5; }
.sep.tall { height: 56px; margin: 8px 0 0 12px; }
.align .body > .two:first-child { width: 115px; }
.combo { display: flex; align-items: center; height: 23px; background: #fff; border: 1px solid #ababab; position: relative; }
.combo select, .namebox input, .formula input { flex: 1; width: 100%; min-width: 0; border: 0; outline: 0; padding: 0 2px; appearance: none; background: none; font: inherit; color: #444; height: 100%; }
.combo .caret { position: absolute; right: 0; }
.fname { width: 158px; } .fsize { width: 40px; margin-left: -1px; font-size: 13px; } .nfmt { width: 131px; }
.wen { flex-direction: column; line-height: 9px; font-size: 10px; }
.wen .han { color: #3f79b7; font-size: 9px; }
.txt { gap: 3px; padding-left: 3px; }
.caret.wide { margin-left: 9px; }
.pct { font-size: 16px; } .line .comma { font-size: 20px; font-weight: 700; padding-bottom: 14px; }
.styles .body { padding-left: 4px; }
.styles .big { width: 62px; }
.anchor { position: relative; }
.styles .open { width: 53px; background: #c8c8c8; }
.cells .body { padding-left: 4px; }
.cells .big { width: 42px; }
.edit .body .stack { padding-left: 7px; width: 93px; }
.edit .total .caret { margin-left: 7px; }
.edit .big { width: 65px; }
.inv .big { width: 54px; }

.menu { position: absolute; left: 0; top: 70px; width: 199px; padding-bottom: 1px; background: #fff; border: 1px solid #c6c6c6; box-shadow: 1px 2px 3px rgba(0, 0, 0, .25); z-index: 5; }
.mi { position: relative; width: 100%; height: 44px; justify-content: flex-start; padding-left: 8px; gap: 8px; font-weight: 600; }
.mi.small { height: 25px; padding-left: 5px; gap: 11px; font-weight: 400; }
.mi.hot { background: #c6c6c6; }
.sub { position: absolute; right: 9px; width: 5px; height: 8px; background: #666; clip-path: polygon(0 0, 100% 50%, 0 100%); }
.menu hr { margin: 0 0 1px; border: 0; height: 1px; background: #dcdcdc; }
.menu hr.inset { margin-left: 44px; }

.fbar { flex: none; display: flex; align-items: center; height: 47px; font-size: 14px; }
.namebox { display: flex; align-items: center; width: 121px; height: 28px; background: #fff; border: 1px solid #c6c6c6; border-left: 0; }
.namebox input { padding-left: 4px; }
.namebox .caret { width: 8px; margin: 0 5px; }
.dots { flex: none; width: 2px; height: 12px; margin: 0 14px; background: repeating-linear-gradient(#aaa 0 2px, transparent 2px 5px); }
.fx { display: flex; width: 110px; height: 28px; background: #fff; border: 1px solid #c6c6c6; }
.fx button { width: 36px; }
.fx .fn { font: bold 15px "Liberation Serif", serif; color: #555; }
.fn small { font-size: 11px; padding-top: 4px; }
.formula { flex: 1; margin-left: 3px; display: flex; align-items: center; height: 28px; background: #fff; border: 1px solid #c6c6c6; border-right: 0; }
.formula .caret { margin: 0 -4px 0 0; }

.work { flex: 1; min-height: 0; display: flex; overflow: hidden; }
.sheet { flex: 1; position: relative; overflow: hidden; }
table { width: 100%; table-layout: fixed; border-collapse: separate; border-spacing: 0; font-family: "Noto Sans CJK SC", sans-serif; }
thead th { height: 13px; padding: 0; font: 9px/12px "Noto Sans", sans-serif; color: #333; background: #e6e6e6; border-right: 1px solid #b5b5b5; border-bottom: 1px solid #999; }
thead th.on { background: #d2d2d2; color: #217346; border-bottom: 2px solid #217346; line-height: 11px; }
tbody th { height: 25px; padding: 0 4px 0 0; vertical-align: bottom; background: #e6e6e6; border-right: 1px solid #999; border-bottom: 1px solid #c4c4c4; font: 9px/9px "Noto Sans", sans-serif; color: #333; }
tbody th div { display: flex; justify-content: flex-end; }
tbody th.on { background: #d2d2d2; color: #217346; border-right: 2px solid #217346; padding-right: 3px; }
td { height: 25px; padding: 0; text-align: center; font-size: 14px; font-weight: 300; line-height: 24px; color: #111; background: #fff; border-right: 1px solid #d0d0d0; border-bottom: 1px solid #d0d0d0; white-space: nowrap; }
td.latin { font-size: 13px; line-height: 23px; padding-top: 1px; }
td.picked { background: #c6c6c6; border-color: #a4a4a4; }
td:last-child { border-right-color: #999; }
.selection { position: absolute; border: 2px solid #217346; }
.selection i { position: absolute; right: -3px; bottom: -3px; width: 6px; height: 6px; background: #217346; border: 1px solid #fff; border-width: 1px 0 0 1px; }
.stamp { position: absolute; left: 690px; top: 517px; }
.vscroll { position: relative; flex: none; width: 6px; display: flex; flex-direction: column; align-items: flex-end; padding-top: 3px; }
.vscroll i { width: 3px; border: 1px solid #aaa; border-right: 0; background: #fff; }
.up { height: 15px; }
.thumb { height: 217px; margin-top: 43px; }

.sheetbar { flex: none; display: flex; align-items: flex-start; height: 28px; border-top: 1px solid #999; font-size: 13px; }
.sheetbar button { height: 24px; padding: 0 12px; position: relative; border-right: 1px solid #a0a0a0; background-clip: padding-box; }
.sheetbar .en { padding: 0 13px; }
.nav { width: 93px; height: 24px; border-right: 1px solid #888; display: flex; align-items: center; padding-left: 18px; gap: 24px; }
.pl, .pr { width: 5px; height: 8px; background: #bbb; clip-path: polygon(100% 0, 100% 100%, 0 50%); }
.pr { clip-path: polygon(0 0, 100% 50%, 0 100%); }
.sheetbar .orange, .sheetbar .blue { padding: 1px; color: #000; font-weight: 500; }
.orange span, .blue span { background: #f4b183; padding: 0 10px; height: 22px; line-height: 20px; }
.blue span { background: #bdd7ee; padding: 0 12px; }
.sheetbar .active { background: #fff; color: #217346; border-bottom: 2px solid #217346; margin-top: -1px; height: 25px; }
.sheetbar button:not(.active):not(.orange):not(.blue):not(.add) { padding-bottom: 2px; }
.sheetbar .add { border: 0; margin: 1px 22px 0 21px; }
.sheetbar .dots { margin: 8px 15px 0 13px; }
.hscroll { flex: 1; display: flex; height: 15px; margin: 6px 6px 0 0; background: #d9d9d9; }
.lbtn, .hthumb { width: 16px; background: #fff; border: 1px solid #ababab; display: flex; align-items: center; justify-content: center; }
.lbtn::after { content: ""; width: 4px; height: 7px; background: #555; clip-path: polygon(100% 0, 100% 100%, 0 50%); }
.hthumb { margin-left: -1px; width: 17px; }

.status { flex: none; display: flex; align-items: center; height: 18px; background: #f1f1f1; border-top: 1px solid #c6c6c6; }
.status > svg { margin-left: 18px; }
.ready { margin-right: 18px; }
.stat { margin-right: 17px; white-space: nowrap; }
.views { display: flex; width: 288px; padding-left: 2px; }
.views button { width: 38px; height: 18px; }
.haze { position: absolute; right: 0; bottom: 0; width: 190px; height: 90px; background: linear-gradient(100deg, rgba(255, 255, 255, 0), rgba(255, 255, 255, .6)); pointer-events: none; }
.haze i { position: absolute; left: 0; right: 30px; bottom: 4px; height: 7px; filter: blur(2px); background: repeating-linear-gradient(90deg, #b5b5b5 0 40px, #eee 60px 68px); opacity: .7; }
.arrows { position: absolute; left: 600px; top: 110px; z-index: 6; pointer-events: none; }
.cursor { position: absolute; left: 871px; top: 419px; z-index: 7; pointer-events: none; }
</style>
